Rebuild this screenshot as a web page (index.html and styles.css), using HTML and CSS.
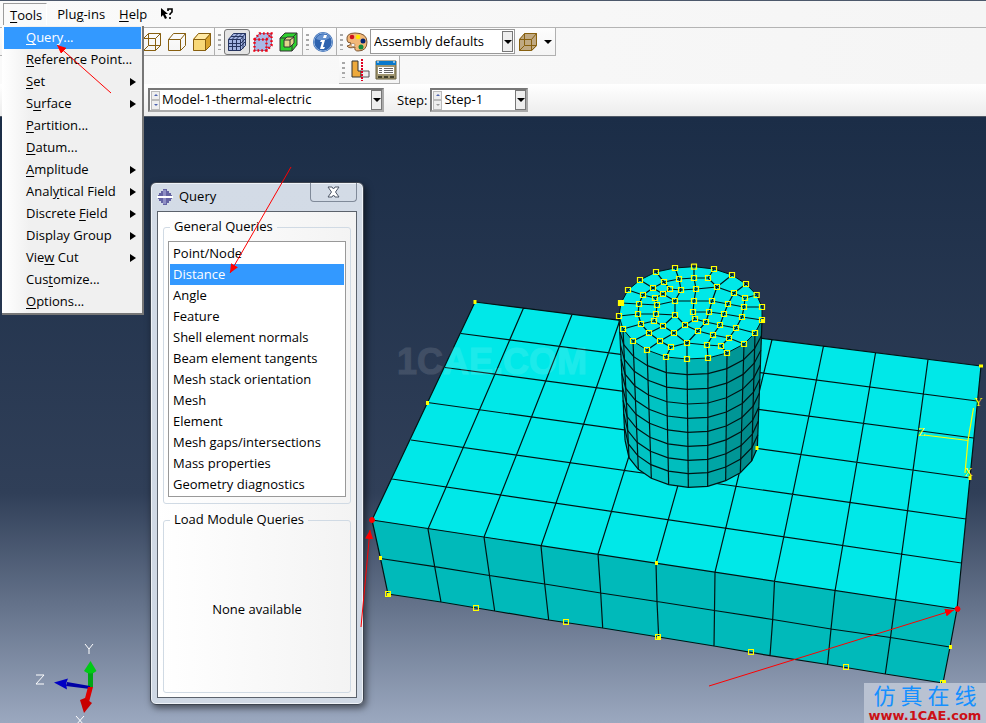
FILE: index.html
```html
<!DOCTYPE html>
<html lang="en">
<head>
<meta charset="utf-8">
<title>Query</title>
<link rel="stylesheet" href="styles.css">
</head>
<body>
<header class="chrome">
  <nav class="menubar">
    <button class="menubar-item open"><u>T</u>ools</button>
    <button class="menubar-item">Plu<u>g</u>-ins</button>
    <button class="menubar-item"><u>H</u>elp</button>
    <button class="menubar-item context-help" aria-label="What's this">
      <svg width="14" height="14" viewBox="0 0 14 14"><path d="M1 1v9l2-2 2 4 2-1-2-4h3z" fill="#000"/><path d="M8 4V2h4v3l-2 2v1M10 10v2" fill="none" stroke="#000" stroke-width="1.6"/></svg>
    </button>
  </nav>
  <div class="toolbar">
    <div class="tools render">
      <button class="tool" aria-label="Wireframe"><svg width="22" height="22"><path d="M2.500 7.500h12v12h-12zM7.500 2.500h12v12h-12zM2.500 7.500l5-5M14.500 7.500l5-5M2.500 19.500l5-5M14.500 19.500l5-5" class="brown"/></svg></button>
      <button class="tool" aria-label="Hidden line"><svg width="22" height="22"><path d="M2.500 8.500h12v11h-12zM2.500 8.500l5-6h12v12l-5 5M14.500 8.500l5-6" class="brown"/></svg></button>
      <button class="tool" aria-label="Shaded"><svg width="22" height="22"><path d="M2 8l6-6h12v12l-6 6H2z" fill="#d9a32c"/><path d="M2 8h12v12H2z" fill="#f8d878"/><path d="M2 8l6-6h12l-6 6z" fill="#ffe9a5"/><path d="M2.500 8.500h12v11h-12zM2.500 8.500l5-6h12v12l-5 5M14.500 8.500l5-6" class="brown"/></svg></button>
    </div>
    <div class="tools">
      <i class="grip"></i>
      <button class="tool pressed" aria-label="Mesh"><svg width="22" height="22"><path d="M2 8l6-6h12v12l-6 6H2z" fill="#a3b4e2"/><path d="M2.500 8.500h12v11h-12zM2.500 8.500l5-6h12v12l-5 5M14.500 8.500l5-6M6.500 19v-11l5-5M10.500 19v-11l5-5M2.500 12.500h12l5-5M2.500 15.500h12l5-5M5 5.500h12v12" fill="none" stroke="#26345f"/></svg></button>
      <button class="tool" aria-label="Seeds"><svg width="22" height="22"><path d="M2 8l6-6h12v12l-6 6H2z" fill="#a9b8e6"/><path d="M2.500 8.500h12v11h-12zM2.500 8.500l5-6h12v12l-5 5M14.500 8.500l5-6" fill="none" stroke="#9a6c92"/><path d="M2.500 8.500h12v11h-12zM2.500 8.500l5-6h12v12l-5 5M14.500 8.500l5-6" fill="none" stroke="#f00012" stroke-width="2.400" stroke-dasharray="1.600 2.200"/></svg></button>
      <button class="tool" aria-label="Sections"><svg width="22" height="22"><path d="M2 7l5-5h12v12l-5 6H2z" fill="#2fd02f" stroke="#333"/><path d="M2 7h12v13M14 7l5-5" fill="none" stroke="#333"/><path d="M6 9l3-3h7v6l-4 4H6z" fill="#e3d58e" stroke="#333"/><path d="M6 9h6v7M12 9l4-3" fill="none" stroke="#333"/></svg></button>
    </div>
    <div class="tools info">
      <i class="grip"></i>
      <button class="tool" aria-label="Information"><svg width="22" height="22"><circle cx="11" cy="11" r="10" fill="#2d62ae"/><circle cx="11" cy="11" r="9" fill="none" stroke="#8eb1df"/><path d="M4 8a8 8 0 0 1 14-1q-6 4-14 1z" fill="#6592d0"/><path d="M12 4h3l-1 3h-3zM9 9h4l-2 7h2l-1 2H8l2-7H8z" fill="#fff"/></svg></button>
    </div>
    <div class="tools colors">
      <i class="grip"></i>
      <button class="tool" aria-label="Color code"><svg width="22" height="22"><path d="M1 9Q0 2 9 2q12 0 12 9 0 9-9 9-4 0-3-4-6 2-8-1 3 0 4-3-4 0-4-3z" fill="#f2b878" stroke="#7b5634"/><circle cx="6" cy="6" r="2.300" fill="#d0121b"/><circle cx="12" cy="6" r="2.300" fill="#ffe600"/><circle cx="17" cy="10" r="2.500" fill="#002070"/><circle cx="15" cy="16" r="2.500" fill="#138a3c"/><ellipse cx="7" cy="14" rx="2" ry="1.500" fill="#fff" stroke="#7b5634" stroke-width=".5"/></svg></button>
      <div class="combo color-combo">
        <select aria-label="Color mapping"><option>Assembly defaults</option></select>
        <span class="drop"></span>
      </div>
      <button class="tool" aria-label="Translucency"><svg width="22" height="22"><path d="M2 8l6-6h12v13l-5 5H2z" fill="#c0a982"/><path d="M2.500 8.500h12v11h-12zM2.500 8.500l5-6h12v12l-5 5M14.500 8.500l5-6M7.500 2.500v12h12M2.500 19.500l5-5" fill="none" stroke="#87600f"/></svg></button>
      <button class="more" aria-label="More"><span class="triangle"></span></button>
    </div>
  </div>
  <div class="toolbar second">
    <div class="tools">
      <i class="grip"></i>
      <button class="tool" aria-label="Datum"><svg width="22" height="22"><path d="M3 2h6v10h3v6H3z" fill="#eda93c" stroke="#333"/><path d="M12 12h8v6h-8z" fill="#eee" stroke="#555"/><path d="M13 0v22" stroke="#e00020" stroke-width="2" stroke-dasharray="2 1"/></svg></button>
      <button class="tool" aria-label="Manager"><svg width="22" height="22"><path d="M1 2h20v18H1z" fill="#a09670" stroke="#68603f"/><path d="M1 2h20v4H1z" fill="#0879cc"/><path d="M2 3h2M18 3h2" stroke="#fff"/><path d="M3 8h16v7H3z" fill="#fff"/><path d="M4 9.500h3M9 9.500h9M4 11.500h3M9 11.500h9M4 13.500h3M9 13.500h9" stroke="#666"/><path d="M3 18h4M9 18h4M15 18h4" stroke="#40402c" stroke-width="2"/></svg></button>
    </div>
  </div>
  <div class="context">
    <div class="combo model-combo">
      <span class="spin"><b class="up"></b><b class="down"></b></span>
      <select aria-label="Model"><option>Model-1-thermal-electric</option></select>
      <span class="drop"></span>
    </div>
    <label for="step">Step:</label>
    <div class="combo step-combo">
      <span class="spin"><b class="up"></b><b class="down off"></b></span>
      <select id="step"><option>Step-1</option></select>
      <span class="drop"></span>
    </div>
  </div>
</header>

<main class="viewport">
  <svg class="model" viewBox="0 117 986 606" preserveAspectRatio="xMinYMin meet" role="img" aria-label="Meshed plate with cylinder">
    <defs>
      <marker id="node" markerWidth="6" markerHeight="6" refX="3" refY="3" viewBox="0 0 6 6" markerUnits="userSpaceOnUse"><path d="M.5 .5h5v5h-5z" fill="none" stroke="#ff0" stroke-width="1.200"/></marker>
    </defs>
    <path d="M475 302L981 366L957 609L372 520z" fill="#00e8e8"/>
    <path d="M372 520L957 609L943 683L388 594z" fill="#00baba"/>
    <path id="plate" class="edge"/>
    <g id="cylinder" transform="translate(600 250) scale(.33333)"></g>
    <text x="397" y="374" class="watermark">1CAE.COM</text>
    <g class="seed">
      <path d="M475 300v4M427.500 401v4M979 366h4M970 476v4M757 446v4M380.500 556v4M656.500 561v4M950.500 645v4"/>
    </g>
    <path class="nodes" d="M388 594L476 608L566 622L658 637L751 652L846 667L943 683"/>
    <path d="M387 593h3v3h-3zM657 636h3v3h-3zM942 681h3v3h-3zM619 301h4v4h-4zM761 319h3v3h-3z" fill="#ff0"/>
    <path d="M924 435L968 440.500M973.500 408L968 440.500L965 473" fill="none" stroke="#ff0" stroke-width="1.200"/>
    <g class="datum"><text x="974" y="406">Y</text><text x="918" y="436">Z</text><text x="964" y="476">X</text></g>
    <path d="M88 687v-15h5v15z" fill="#00a516"/><path d="M90.500 661l6 10q-6 5-12.500 0z" fill="#00ca16"/>
    <path d="M90 689l-24-3 1-4 23 4z" fill="#0000a5"/><path d="M54 682.500l14-4-2 5 1 6z" fill="#0000c4"/>
    <path d="M88 687h5l-4 15h-5z" fill="#d00"/><path d="M80 700l5-2 7 5-8 10z" fill="#c80000"/>
    <path d="M85 644l4 5 4-5M89 649v5M36 675h8l-8 9h8M76 716l8 9M84 716l-8 9" fill="none" stroke="#fff"/>
  </svg>
  <aside class="site-mark">
    <span class="site-name">仿 真 在 线</span>
    <span class="site-url">www.1CAE.com</span>
  </aside>
</main>

<div class="menu" role="menu">
  <button class="menu-item active"><span><u>Q</u>uery...</span></button>
  <button class="menu-item"><span><u>R</u>eference Point...</span></button>
  <button class="menu-item sub"><span><u>S</u>et</span></button>
  <button class="menu-item sub"><span>S<u>u</u>rface</span></button>
  <button class="menu-item"><span><u>P</u>artition...</span></button>
  <button class="menu-item"><span><u>D</u>atum...</span></button>
  <button class="menu-item sub"><span><u>A</u>mplitude</span></button>
  <button class="menu-item sub"><span>Anal<u>y</u>tical Field</span></button>
  <button class="menu-item sub"><span>Discrete <u>F</u>ield</span></button>
  <button class="menu-item sub"><span>Display Group</span></button>
  <button class="menu-item sub"><span>Vie<u>w</u> Cut</span></button>
  <button class="menu-item"><span>Cus<u>t</u>omize...</span></button>
  <button class="menu-item"><span><u>O</u>ptions...</span></button>
</div>

<section class="dialog" role="dialog" aria-labelledby="dialog-title">
  <header class="titlebar">
    <svg width="16" height="18" viewBox="0 0 16 18"><path d="M6 1h4v2h2v2h2v2h1v1H1V7h1V5h2V3h2zM1 10h14v1h-1v2h-2v2h-2v2H6v-2H4v-2H2v-2H1z" fill="#6463a3"/><path d="M6 2h3v6H6zM6 10h3v6H6z" fill="#8f8fc4"/><path d="M0 9h16" stroke="#fff" stroke-width="2"/></svg>
    <h1 id="dialog-title">Query</h1>
    <button class="close" aria-label="Close"><svg width="13" height="12"><path d="M1 1h4l1.500 2L8 1h4L8.500 6l3.500 5H8L6.500 9 5 11H1l3.500-5z" fill="#fff" stroke="#4d5666"/></svg></button>
  </header>
  <div class="dialog-body">
    <fieldset>
      <legend>General Queries</legend>
      <ul class="list">
        <li><button>Point/Node</button></li>
        <li><button class="selected">Distance</button></li>
        <li><button>Angle</button></li>
        <li><button>Feature</button></li>
        <li><button>Shell element normals</button></li>
        <li><button>Beam element tangents</button></li>
        <li><button>Mesh stack orientation</button></li>
        <li><button>Mesh</button></li>
        <li><button>Element</button></li>
        <li><button>Mesh gaps/intersections</button></li>
        <li><button>Mass properties</button></li>
        <li><button>Geometry diagnostics</button></li>
      </ul>
    </fieldset>
    <fieldset class="module">
      <legend>Load Module Queries</legend>
      <p>None available</p>
    </fieldset>
  </div>
</section>

<svg class="arrows" width="986" height="723" viewBox="0 0 986 723" aria-hidden="true">
  <defs><marker id="head" markerWidth="10" markerHeight="8" refX="9" refY="4" orient="auto" markerUnits="userSpaceOnUse"><path d="M0 0L9 4L0 8z" fill="#f00"/></marker></defs>
  <path d="M111 93L57 45" marker-end="url(#head)"/>
  <path d="M291 167L230 273" marker-end="url(#head)"/>
  <path d="M361 627L370 530" marker-end="url(#head)"/>
  <path d="M709 686L954 610" marker-end="url(#head)"/>
  <circle cx="372" cy="520" r="2.500"/><circle cx="957.500" cy="609" r="2.500"/>
</svg>
<script src="mesh.js"></script>
</body>
</html>
```
FILE: styles.css
```css
* { box-sizing: border-box; }
body {
  margin: 0;
  min-height: 100vh;
  display: flex;
  flex-direction: column;
  position: relative;
  overflow: hidden;
  font: 13px/20px "Open Sans", "Noto Sans", sans-serif;
  color: #000;
}
button, select {
  font: inherit;
  color: inherit;
  border: 0;
  padding: 0;
  margin: 0;
  background: none;
  border-radius: 0;
}
svg { display: block; flex: none; }
u { text-underline-offset: 2px; }

.chrome { background: linear-gradient(90deg, #fafafa, #f5f5f5); border-top: 1px solid #4c586b; }
.menubar { height: 27px; display: flex; align-items: center; padding-left: 3px; border-bottom: 1px solid #b4b4b4; }
.menubar-item { padding: 0 7px; height: 22px; white-space: nowrap; }
.menubar-item.open { border: 1px solid #9c9c9c; border-right-color: #fff; border-bottom: 0; padding: 0 4px 0 6px; margin-right: 3px; }
.context-help { padding: 0 6px; }

.toolbar { display: flex; height: 28px; }
.tools { display: flex; align-items: center; border-right: 1px solid #b0b0b0; border-bottom: 1px solid #b0b0b0; background: linear-gradient(#fdfdfd, #f4f4f4); }
.render { padding-left: 139px; }
.tool { width: 26px; height: 26px; display: grid; place-items: center; }
.render .tool { width: 25px; }
.pressed { border: 1px solid #777; border-radius: 3px; background: #e4e4e4; }
.grip { width: 3px; height: 16px; margin: 0 3px; background: repeating-linear-gradient(#a8a8a8 0 2px, transparent 2px 5px); }
.info .grip, .colors .grip { margin-right: 1px; }
.brown { fill: none; stroke: #875f10; }
.second { padding-left: 339px; }
.second .grip { margin-right: 2px; }
.more { width: 14px; height: 24px; display: grid; place-items: center; }
.triangle, .drop::after { content: ""; border: 4px solid transparent; border-top-color: #000; border-bottom: 0; }

.combo { display: flex; align-items: center; background: #fff; border: 1px solid #999; padding: 1px; }
.combo select { appearance: none; flex: 1; min-width: 0; outline: 0; height: 20px; line-height: 18px; padding: 0 0 2px 2px; }
.drop { align-self: stretch; width: 11px; border: 1px solid #777; background: #eee; display: grid; place-items: center; pointer-events: none; }
.color-combo { width: 145px; height: 25px; }
.context { height: 33px; display: flex; align-items: center; padding-left: 148px; border-bottom: 1px solid #505966; background: linear-gradient(#fff, #ececec); }
.context .combo { height: 24px; border: 2px solid #777; border-right-color: #aaa; border-bottom-color: #aaa; padding: 0; }
.model-combo { width: 236px; }
.step-combo { width: 98px; }
.context label { margin: 0 3px 0 13px; }
.spin { width: 9px; height: 19px; margin-left: 1px; display: grid; grid-template-rows: 1fr 1fr; }
.spin b { border: 1px solid #bbb; background: #eee; display: grid; place-items: center; }
.spin b::after { content: ""; border: 2px solid transparent; }
.spin .up::after { border-bottom-color: #4e64b0; border-top: 0; }
.spin .down::after { border-top-color: #4e64b0; border-bottom: 0; }
.spin .off::after { border-top-color: #999; }

.viewport { flex: 1; position: relative; background: linear-gradient(#1b2d47 0%, #303f58 62%, #9ba8bf 100%); }
.model { width: 100%; height: auto; }
.edge { fill: none; stroke: #001414; stroke-width: 1.2; }
.ring { fill: none; stroke: #001414; stroke-width: 3.6; }
.nodes { fill: none; marker-start: url(#node); marker-mid: url(#node); marker-end: url(#node); }
.seed { stroke: #ff0; stroke-width: 3; }
.watermark { font: bold 36px "Liberation Sans", sans-serif; fill: #fff; stroke: #fff; opacity: .11; }
.datum { font: 12px "Liberation Serif", serif; fill: #ff0; }
.site-mark { position: absolute; right: 0; bottom: 0; width: 122px; height: 40px; background: #b9c2d2; display: flex; flex-direction: column; justify-content: space-between; align-items: center; white-space: nowrap; }
.site-name { font: 22px/22px "Noto Sans CJK SC", sans-serif; color: #1590ff; }
.site-url { font: bold 13px/14px "DejaVu Sans", sans-serif; color: #cc1016; }

.menu { position: absolute; left: 2px; top: 26px; width: 142px; padding: 1px 1px 0 2px; display: flex; flex-direction: column; background: linear-gradient(90deg, #fff, #f0f0f0 20%); border: 1px solid #777; border-width: 0 2px 2px 0; }
.menu-item { height: 22px; padding: 0 5px 0 22px; display: flex; align-items: center; justify-content: space-between; text-align: left; white-space: nowrap; }
.menu-item span { line-height: 18px; padding-bottom: 2px; }
.menu-item.active { background: #3399ff; color: #fff; }
.sub::after { content: ""; border: 4px solid transparent; border-left: 6px solid #000; border-right: 0; }

.dialog { position: absolute; left: 150px; top: 182px; width: 214px; padding: 0 6px 6px; border: 1px solid #3d444f; border-radius: 6px; background: linear-gradient(#d3dbe6, #cfd8e4); box-shadow: inset 0 0 0 1px #eef2f7, 2px 3px 7px #0008; }
.titlebar { height: 28px; display: flex; align-items: center; }
.titlebar h1 { flex: 1; margin: 0 0 0 6px; padding-bottom: 2px; font-size: 13px; line-height: 18px; font-weight: 400; }
.close { align-self: flex-start; width: 47px; height: 19px; border: 1px solid #808a99; border-top: 0; border-radius: 0 0 4px 4px; display: grid; place-items: center; }
.dialog-body { height: 487px; padding: 5px 5px 4px; border: 1px solid #5b626c; background: linear-gradient(90deg, #fff, #f3f3f3); display: flex; flex-direction: column; gap: 6px; }
fieldset { margin: 0; padding: 4px 4px 6px; border: 1px solid #d0dae4; border-radius: 3px; min-width: 0; }
legend { margin-left: 2px; padding: 0 4px 2px; line-height: 18px; }
.list { list-style: none; margin: 0; padding: 1px; background: #fff; border: 1px solid #999; }
.list button { display: block; width: 100%; height: 21px; padding: 0 0 2px 3px; line-height: 18px; text-align: left; white-space: nowrap; }
.list .selected { background: #3399ff; color: #fff; }
.module { flex: 1; }
.module p { margin: 65px 0 0; text-align: center; }
.arrows { position: absolute; left: 0; top: 0; pointer-events: none; fill: #f00; stroke: #f00; }
.arrows marker { stroke: none; }
```
FILE: mesh.js
```js
const lerp = (a, b, t) => [a[0] + (b[0] - a[0]) * t, a[1] + (b[1] - a[1]) * t];
const line = pts => 'M' + pts.map(p => p.map(v => v.toFixed(1)).join(' ')).join('L');
const parse = s => s.trim().split(/\s+/).map(p => p.split(',').map(Number));

/* Plate: matching points along its long and short edges. */
const back = parse('475,302 523.5,308 572,314.5 620,320 670,326.5 721,333 772,339.5 823.5,346 875.5,353 928,359.5 981,366');
const front = parse('372,520 428,529 484,537 541,546 598,554 656,563 715,572 774.5,581.5 835,591 895.5,600 957,609');
const middle = parse('380.5,558.5 434.7,566.7 489.5,575.5 544.7,584 600.7,593 657,601.5 714.5,610.5 772.7,619.5 831,629 890.5,637.5 950,647');
const bottom = parse('388,594 441,602 494.7,611 548.7,620 602.7,628 658.7,637 714,646 770,655.7 827.5,664.5 885.3,674 943,683');
const left = parse('475,302 461,333.5 445,367.5 427.5,402.5 411,440 392,479 372,520');
const right = parse('981,366 977,401 973.5,438 970,478 966,519 961.5,563 957,609');
const plate = [
  ...back.map((p, i) => [p, front[i], middle[i], bottom[i]]),
  ...left.map((p, i) => [p, right[i]]),
  middle, bottom
];
document.getElementById('plate').setAttribute('d', plate.map(line).join(''));

/* Cylinder, in thirds of a unit. */
const rim = parse('57,198 69,237 99,273 141,300 198,321 261,327 324,324 381,309 432,282 465,249 486,210');
const foot = parse('75,570 87,623 115,658 154,685 206,704 265,712 323,709 377,692 421,668 455,633 472,595');
const rest = parse('486,171 470,135 438,102 396,75 342,57 282,50 225,54 168,66 120,90 84,120 63,159');
const shades = ['#00b4b4', '#00bcbc', '#00c3c3', '#00c3c3', '#00bebe', '#00b4b4', '#00a5a5', '#009696', '#008b8b', '#008585'];
const steps = [47, 91, 135, 178, 220, 262, 304, 344, 385].map(v => v / 385);
const faces = `
57,198 114,192 117,162 129,135 159,114 192,96 237,87 282,84 324,84 351,111 402,129 435,144 432,171 426,201 408,234 387,264 363,288 321,285 261,279 213,291 180,273 147,249 123,222 114,192
225,54 237,87 243,120 225,153 225,195 255,225 294,243 339,255 387,264 432,282
282,50 282,84 288,117 282,153 279,186 285,207 318,216 360,225 408,234 465,249
342,57 324,84
168,66 192,96 210,117 243,120 288,117 351,111 396,75
120,90 159,114 189,132 225,153 282,153 336,153 384,162 432,171 486,171
210,117 189,132 165,144 171,165 168,192 162,213 189,228 222,249 261,279 261,327
84,120 129,135 165,144
63,159 117,162 171,165 225,153
114,192 168,192 225,195 189,228 147,249 99,273
69,237 123,222 162,213
141,300 180,273 222,249 255,225 285,207
198,321 213,291
261,279 294,243 318,216 327,186 336,153 351,111
324,324 321,285 339,255 360,225 372,192 384,162 402,129 438,102
381,309 363,288
279,186 327,186 372,192 426,201 486,210
435,144 470,135`.trim().split('\n').map(parse);

const cylinder = document.getElementById('cylinder');
const add = (pts, attrs) => {
  const path = document.createElementNS('http://www.w3.org/2000/svg', 'path');
  path.setAttribute('d', line(pts));
  for (const key in attrs) path.setAttribute(key, attrs[key]);
  cylinder.append(path);
};
shades.forEach((fill, i) => add([rim[i], rim[i + 1], foot[i + 1], foot[i]], { fill }));
rim.forEach((p, i) => add([p, foot[i]], { class: 'ring' }));
steps.forEach(t => add(rim.map((p, i) => lerp(p, foot[i], t)), { class: 'ring' }));
const outline = [...rim, ...rest, rim[0]];
add(outline, { fill: '#00e8e8', stroke: '#001414', 'stroke-width': 3 });
faces.forEach(pts => add(pts, { class: 'ring' }));
const unique = new Map([...outline, ...faces.flat()].map(p => [p.join(), p]));
for (const [x, y] of unique.values()) {
  add([[x - 7.5, y - 7.5], [x + 7.5, y - 7.5], [x + 7.5, y + 7.5], [x - 7.5, y + 7.5], [x - 7.5, y - 9]], { fill: 'none', stroke: '#ff0', 'stroke-width': 3.6 });
}
```
